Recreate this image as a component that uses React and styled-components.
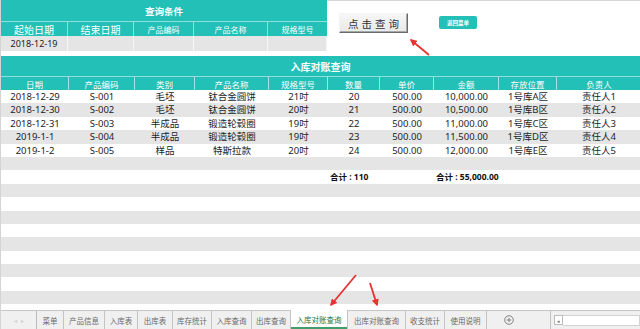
import { createGlobalStyle, styled } from "styled-components";

const TEAL = "#22c0b7";
const STRIPE = "#e5e5e5";
const COLS = "68px 66px 60px 74px 59px 52px 54px 65px 58px 84px";

const GlobalStyle = createGlobalStyle`
    html, body {
        margin: 0;
        padding: 0;
        background: #ffffff;
        overflow: hidden;
    }
    body {
        font-family: "Noto Sans", "Noto Sans CJK SC", sans-serif;
    }
`;

const queryHeads = ["起始日期", "结束日期", "产品编码", "产品名称", "规格型号"];
const queryValues = ["2018-12-19", "", "", "", ""];

const heads = ["日期", "产品编码", "类别", "产品名称", "规格型号", "数量", "单价", "金额", "存放位置", "负责人"];

const rows = [
    ["2018-12-29", "S-001", "毛坯", "钛合金圆饼", "21吋", "20", "500.00", "10,000.00", "1号库A区", "责任人1"],
    ["2018-12-30", "S-002", "毛坯", "钛合金圆饼", "20吋", "21", "500.00", "10,500.00", "1号库B区", "责任人2"],
    ["2018-12-31", "S-003", "半成品", "锻造轮毂圈", "19吋", "22", "500.00", "11,000.00", "1号库C区", "责任人3"],
    ["2019-1-1", "S-004", "半成品", "锻造轮毂圈", "19吋", "23", "500.00", "11,500.00", "1号库D区", "责任人4"],
    ["2019-1-2", "S-005", "样品", "特斯拉款", "20吋", "24", "500.00", "12,000.00", "1号库E区", "责任人5"],
];

// 底部工作表标签
const tabs = [
    { name: "菜单", w: 27 },
    { name: "产品信息", w: 41 },
    { name: "入库表", w: 33 },
    { name: "出库表", w: 35 },
    { name: "库存统计", w: 39 },
    { name: "入库查询", w: 40 },
    { name: "出库查询", w: 39 },
    { name: "入库对账查询", w: 57, active: true },
    { name: "出库对账查询", w: 58 },
    { name: "收支统计", w: 39 },
    { name: "使用说明", w: 42 },
];

const FILLER = 12;

export default function App() {
    return (
        <>
            <GlobalStyle />
            <Page>
                <Top>
                    <QueryPanel>
                        <QueryTitle>查询条件</QueryTitle>
                        {queryHeads.map((h, i) => (
                            <QueryHead key={h} $big={i < 2}>{h}</QueryHead>
                        ))}
                        {queryValues.map((v, i) => (
                            <QueryValue key={i}>{v}</QueryValue>
                        ))}
                    </QueryPanel>
                    <Actions>
                        <SearchButton>点击查询</SearchButton>
                        <MenuBadge>返回菜单</MenuBadge>
                    </Actions>
                </Top>

                <Band>入库对账查询</Band>

                <Sheet>
                    <HeadRow>
                        {heads.map((h) => (
                            <HeadCell key={h}>{h}</HeadCell>
                        ))}
                    </HeadRow>
                    <Body>
                        {rows.map((r, i) => (
                            <Row key={r[1]} $odd={i % 2 === 1}>
                                {r.map((c, j) => (
                                    <Cell key={j}>{c}</Cell>
                                ))}
                            </Row>
                        ))}
                        <Row $odd>
                            {heads.map((h) => <Cell key={h} />)}
                        </Row>
                        <Row>
                            <Cell />
                            <Cell />
                            <Cell />
                            <Cell />
                            <Cell />
                            <SumCell>合计 : 110</SumCell>
                            <Cell />
                            <SumCell>合计 : 55,000.00</SumCell>
                            <Cell />
                            <Cell />
                        </Row>
                        {Array.from({ length: FILLER }).map((_, i) => (
                            <Row key={i} $odd={i % 2 === 0} />
                        ))}
                    </Body>
                </Sheet>

                <TabBar>
                    <NavArrows>
                        <span>◂</span>
                        <span>▸</span>
                    </NavArrows>
                    {tabs.map((t) => (
                        <Tab key={t.name} $w={t.w} $active={t.active}>{t.name}</Tab>
                    ))}
                    <AddTab>
                        <svg width="10" height="10" viewBox="0 0 10 10">
                            <circle cx="5" cy="5" r="4.3" fill="none" stroke="#777" strokeWidth="0.9" />
                            <path d="M5 2.8v4.4M2.8 5h4.4" stroke="#777" strokeWidth="0.9" />
                        </svg>
                    </AddTab>
                    <Scroll>
                        <ScrollThumb>◂</ScrollThumb>
                        <ScrollTrack />
                    </Scroll>
                </TabBar>

                <Arrows width="640" height="329" viewBox="0 0 640 329">
                    <defs>
                        <marker id="head" viewBox="0 0 10 10" refX="8" refY="5" markerWidth="4" markerHeight="4" orient="auto">
                            <path d="M0 0L10 5L0 10z" fill="#e8322f" />
                        </marker>
                    </defs>
                    <line x1="428" y1="55" x2="410" y2="40" stroke="#e8322f" strokeWidth="1.8" markerEnd="url(#head)" />
                    <line x1="355" y1="275" x2="330" y2="305" stroke="#e8322f" strokeWidth="1.8" markerEnd="url(#head)" />
                    <line x1="369" y1="283" x2="376" y2="305" stroke="#e8322f" strokeWidth="1.8" markerEnd="url(#head)" />
                </Arrows>
            </Page>
        </>
    );
}

const Page = styled.div`
    position: relative;
    width: 640px;
    height: 329px;
    display: flex;
    flex-direction: column;
    background: #ffffff;
    border-left: 1px solid #d4d4d4;
    box-sizing: border-box;
    overflow: hidden;
`;

const Top = styled.div`
    display: flex;
    height: 56px;
`;

const QueryPanel = styled.div`
    display: grid;
    grid-template-columns: 67px 66px 60px 74px 59px;
    grid-template-rows: 22px 14px 15px;
    align-content: start;
`;

const QueryTitle = styled.div`
    grid-column: 1 / -1;
    background: ${TEAL};
    color: #ffffff;
    font-size: 9.5px;
    font-weight: 700;
    display: flex;
    align-items: center;
    justify-content: center;
    border-bottom: 1px solid #8fe0da;
`;

const QueryHead = styled.div`
    background: ${TEAL};
    color: #ffffff;
    font-size: ${(p) => (p.$big ? "10px" : "8px")};
    display: flex;
    align-items: center;
    justify-content: center;
    border-right: 1px solid #8fe0da;
    &:nth-child(6) {
        border-right: none;
    }
`;

const QueryValue = styled.div`
    background: ${STRIPE};
    color: #222222;
    font-size: 9px;
    display: flex;
    align-items: center;
    justify-content: center;
    border-right: 1px solid #f6f6f6;
`;

const Actions = styled.div`
    flex: 1;
    display: flex;
    align-items: flex-start;
    gap: 31px;
    padding: 13px 0 0 12px;
    border-top: 1px solid #d6d6d6;
    box-sizing: border-box;
`;

const SearchButton = styled.button`
    width: 69px;
    height: 20px;
    margin-top: -1px;
    padding: 0;
    font-family: "Noto Sans CJK SC", sans-serif;
    font-size: 10.5px;
    letter-spacing: 3px;
    text-indent: 3px;
    color: #333333;
    background: linear-gradient(#f7f7f7, #e8e8e8);
    border: 1px solid;
    border-color: #f4f4f4 #6b6b6b #6b6b6b #f4f4f4;
    box-shadow: inset -1px -1px 0 #a8a8a8;
`;

const MenuBadge = styled.div`
    width: 38px;
    height: 13px;
    margin-top: 2px;
    border-radius: 2px;
    background: ${TEAL};
    color: #ffffff;
    font-size: 5.5px;
    font-weight: 700;
    display: flex;
    align-items: center;
    justify-content: center;
`;

const Band = styled.div`
    height: 21px;
    background: ${TEAL};
    color: #ffffff;
    font-size: 10px;
    font-weight: 700;
    display: flex;
    align-items: center;
    justify-content: center;
    border-bottom: 1px solid #8fe0da;
    box-sizing: border-box;
`;

const Sheet = styled.div`
    display: flex;
    flex-direction: column;
    height: 233px;
    overflow: hidden;
`;

const HeadRow = styled.div`
    display: grid;
    grid-template-columns: ${COLS};
    height: 13px;
    flex: none;
    background: ${TEAL};
`;

const HeadCell = styled.div`
    color: #ffffff;
    font-size: 8.5px;
    display: flex;
    align-items: center;
    justify-content: center;
    border-right: 1px solid #a3e6e1;
    &:last-child {
        border-right: none;
    }
`;

const Body = styled.div`
    display: flex;
    flex-direction: column;
`;

const Row = styled.div`
    display: grid;
    grid-template-columns: ${COLS};
    height: 13.4px;
    flex: none;
    background: ${(p) => (p.$odd ? STRIPE : "#ffffff")};
`;

const Cell = styled.div`
    color: #1e1e1e;
    font-size: 9.5px;
    line-height: 13.4px;
    text-align: center;
    white-space: nowrap;
`;

const SumCell = styled.div`
    color: #111111;
    font-size: 8.5px;
    font-weight: 700;
    line-height: 13.4px;
    padding-left: 2px;
    white-space: nowrap;
`;

const TabBar = styled.div`
    flex: 1;
    display: flex;
    align-items: stretch;
    background: #f0f0f0;
    border-top: 1px solid #c6c6c6;
    font-family: "Noto Sans CJK SC", sans-serif;
`;

const NavArrows = styled.div`
    width: 35px;
    display: flex;
    align-items: center;
    justify-content: center;
    gap: 4px;
    color: #cfcfcf;
    font-size: 6px;
    border-right: 1px solid #bdbdbd;
`;

const Tab = styled.div`
    width: ${(p) => p.$w}px;
    flex: none;
    display: flex;
    align-items: center;
    justify-content: center;
    font-size: 7.5px;
    color: ${(p) => (p.$active ? "#217346" : "#6a6a6a")};
    background: ${(p) => (p.$active ? "#ffffff" : "transparent")};
    border-right: 1px solid #c4c4c4;
    margin-top: ${(p) => (p.$active ? "-1px" : "0")};
    box-shadow: ${(p) => (p.$active ? "inset 0 -2px 0 #3f9e6a" : "none")};
    box-sizing: border-box;
`;

const AddTab = styled.div`
    width: 64px;
    display: flex;
    align-items: center;
    padding-left: 17px;
    border-right: 1px solid #c4c4c4;
    box-sizing: border-box;
`;

const Scroll = styled.div`
    flex: 1;
    display: flex;
    align-items: center;
    padding-left: 3px;
`;

const ScrollThumb = styled.div`
    width: 7px;
    height: 8px;
    border: 1px solid #bcbcbc;
    background: #ffffff;
    color: #666;
    font-size: 5px;
    display: flex;
    align-items: center;
    justify-content: center;
`;

const ScrollTrack = styled.div`
    flex: 1;
    height: 9px;
    background: #ffffff;
    border: 1px solid #d2d2d2;
    border-left: none;
`;

const Arrows = styled.svg`
    position: absolute;
    left: 0;
    top: 0;
    pointer-events: none;
`;
